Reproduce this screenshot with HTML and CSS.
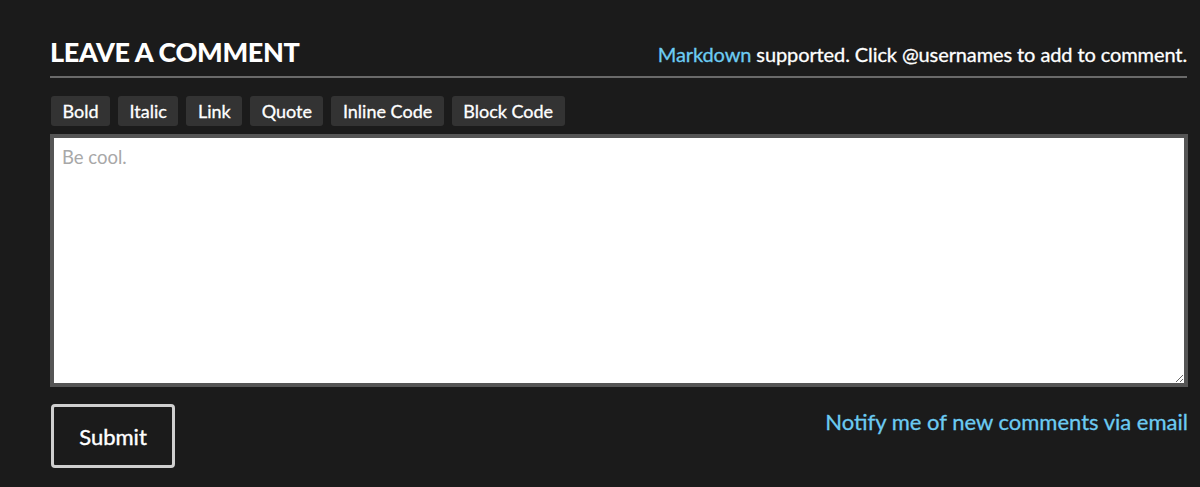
FILE: index.html
```html
<!DOCTYPE html>
<html>
<head>
<meta charset="utf-8">
<link rel="stylesheet" href="styles.css">
</head>
<body>
<div class="comment-form">
  <div class="head">
    <h2 class="title">LEAVE A COMMENT</h2>
    <div class="hint"><a class="link" href="#">Markdown</a> supported. Click @usernames to add to comment.</div>
  </div>
  <div class="toolbar">
    <button class="tool">Bold</button>
    <button class="tool">Italic</button>
    <button class="tool">Link</button>
    <button class="tool">Quote</button>
    <button class="tool">Inline Code</button>
    <button class="tool">Block Code</button>
  </div>
  <textarea class="box" placeholder="Be cool."></textarea>
  <div class="foot">
    <button class="submit">Submit</button>
    <a class="notify" href="#">Notify me of new comments via email</a>
  </div>
</div>
</body>
</html>
```
FILE: styles.css
```css
html, body {
  margin: 0;
  padding: 0;
  background: #1b1b1b;
  font-family: Lato, "Open Sans", sans-serif;
  color: #fff;
}
.comment-form {
  width: 1138px;
  margin-left: 50px;
  padding-top: 36px;
}
.head {
  display: flex;
  justify-content: space-between;
  align-items: baseline;
  border-bottom: 2px solid #6a6a6a;
  margin-right: 1px;
  padding-bottom: 8px;
}
.title {
  margin: 0;
  font-size: 27px;
  font-weight: 900;
  letter-spacing: -0.35px;
  line-height: 32px;
}
.hint {
  font-size: 20px;
  letter-spacing: -0.1px;
  -webkit-text-stroke: 0.3px currentColor;
}
.link {
  color: #6ccbf2;
  text-decoration: none;
}
.toolbar {
  display: flex;
  gap: 8px;
  margin-top: 18px;
  margin-left: 1px;
}
.tool {
  background: #333;
  color: #fff;
  border: none;
  border-radius: 3px;
  font-family: Lato, sans-serif;
  font-size: 18px;
  height: 30px;
  padding: 0 11.5px;
  -webkit-text-stroke: 0.3px currentColor;
}
.box {
  display: block;
  box-sizing: border-box;
  width: 1138px;
  height: 253px;
  margin-top: 8px;
  border: 4px solid #555;
  background: #fff;
  font-family: Lato, sans-serif;
  font-size: 18.5px;
  padding: 8px 8px;
  resize: vertical;
}
.box::placeholder {
  color: #a8a8a8;
}
.foot {
  display: flex;
  justify-content: space-between;
  align-items: flex-start;
  margin-top: 17px;
}
.submit {
  box-sizing: border-box;
  width: 124px;
  height: 64px;
  margin-left: 1px;
  background: #1b1b1b;
  border: 3px solid #cfcfcf;
  border-radius: 4px;
  color: #fff;
  font-family: Lato, sans-serif;
  font-size: 22px;
  -webkit-text-stroke: 0.4px currentColor;
}
.notify {
  color: #6ccbf2;
  text-decoration: none;
  font-size: 22px;
  margin-top: 4px;
  -webkit-text-stroke: 0.3px currentColor;
}
```
